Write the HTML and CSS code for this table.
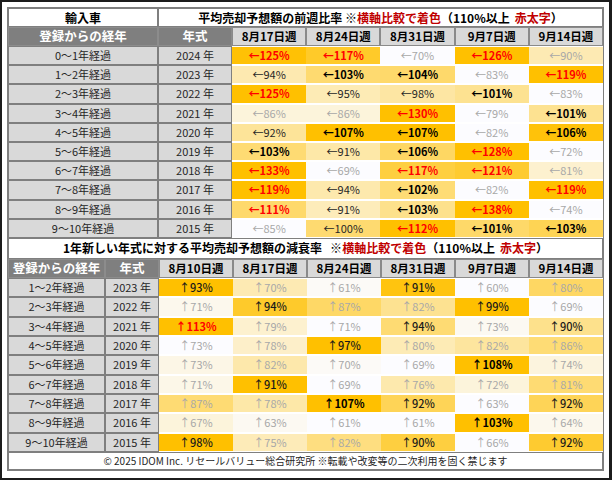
FILE: index.html
```html
<!DOCTYPE html>
<html lang="ja">
<head>
<meta charset="utf-8">
<link rel="stylesheet" href="styles.css">
</head>
<body>
<div class="frame">
<div class="sheet">
  <div class="grid top">
    <div class="ttl">輸入車</div>
    <div class="ttl span">平均売却予想額の前週比率 ※<span class="dr">横軸比較で着色</span>（110%以上<span class="dr sp">赤太字</span>）</div>
    <div class="hd">登録からの経年</div><div class="hd">年式</div>
    <div class="wk">8月17日週</div><div class="wk">8月24日週</div><div class="wk">8月31日週</div><div class="wk">9月7日週</div><div class="wk">9月14日週</div>

    <div class="lab">0～1年経過</div><div class="lab">2024 年</div>
    <div class="c r" style="--t:.98">←125%</div><div class="c r" style="--t:.84">←117%</div><div class="c g" style="--t:0">←70%</div><div class="c r" style="--t:1">←126%</div><div class="c g" style="--t:.3">←90%</div>

    <div class="lab">1～2年経過</div><div class="lab">2023 年</div>
    <div class="c n" style="--t:.31">←94%</div><div class="c b" style="--t:.56">←103%</div><div class="c b" style="--t:.58">←104%</div><div class="c g" style="--t:0">←83%</div><div class="c r" style="--t:1">←119%</div>

    <div class="lab">2～3年経過</div><div class="lab">2022 年</div>
    <div class="c r" style="--t:1">←125%</div><div class="c n" style="--t:.29">←95%</div><div class="c n" style="--t:.36">←98%</div><div class="c b" style="--t:.43">←101%</div><div class="c g" style="--t:0">←83%</div>

    <div class="lab">3～4年経過</div><div class="lab">2021 年</div>
    <div class="c g" style="--t:.14">←86%</div><div class="c g" style="--t:.14">←86%</div><div class="c r" style="--t:1">←130%</div><div class="c g" style="--t:0">←79%</div><div class="c b" style="--t:.43">←101%</div>

    <div class="lab">4～5年経過</div><div class="lab">2020 年</div>
    <div class="c n" style="--t:.4">←92%</div><div class="c b" style="--t:1">←107%</div><div class="c b" style="--t:1">←107%</div><div class="c g" style="--t:0">←82%</div><div class="c b" style="--t:.96">←106%</div>

    <div class="lab">5～6年経過</div><div class="lab">2019 年</div>
    <div class="c b" style="--t:.55">←103%</div><div class="c n" style="--t:.34">←91%</div><div class="c b" style="--t:.61">←106%</div><div class="c r" style="--t:1">←128%</div><div class="c g" style="--t:0">←72%</div>

    <div class="lab">6～7年経過</div><div class="lab">2018 年</div>
    <div class="c r" style="--t:1">←133%</div><div class="c g" style="--t:0">←69%</div><div class="c r" style="--t:.75">←117%</div><div class="c r" style="--t:.81">←121%</div><div class="c g" style="--t:.19">←81%</div>

    <div class="lab">7～8年経過</div><div class="lab">2017 年</div>
    <div class="c r" style="--t:1">←119%</div><div class="c n" style="--t:.32">←94%</div><div class="c b" style="--t:.54">←102%</div><div class="c g" style="--t:0">←82%</div><div class="c r" style="--t:1">←119%</div>

    <div class="lab">8～9年経過</div><div class="lab">2016 年</div>
    <div class="c r" style="--t:.58">←111%</div><div class="c n" style="--t:.27">←91%</div><div class="c b" style="--t:.45">←103%</div><div class="c r" style="--t:1">←138%</div><div class="c g" style="--t:0">←74%</div>

    <div class="lab">9～10年経過</div><div class="lab">2015 年</div>
    <div class="c g" style="--t:0">←85%</div><div class="c n" style="--t:.56">←100%</div><div class="c r" style="--t:1">←112%</div><div class="c b" style="--t:.59">←101%</div><div class="c b" style="--t:.67">←103%</div>
  </div>

  <div class="grid bot">
    <div class="ttl full">1年新しい年式に対する平均売却予想額の減衰率<span class="sp2">※</span><span class="dr">横軸比較で着色</span>（110%以上<span class="dr sp">赤太字</span>）</div>
    <div class="hd">登録からの経年</div><div class="hd">年式</div>
    <div class="wk">8月10日週</div><div class="wk">8月17日週</div><div class="wk">8月24日週</div><div class="wk">8月31日週</div><div class="wk">9月7日週</div><div class="wk">9月14日週</div>

    <div class="lab">1～2年経過</div><div class="lab">2023 年</div>
    <div class="c d" style="--t:1">↑93%</div><div class="c g" style="--t:.3">↑70%</div><div class="c g" style="--t:.03">↑61%</div><div class="c d" style="--t:.94">↑91%</div><div class="c g" style="--t:0">↑60%</div><div class="c g" style="--t:.61">↑80%</div>

    <div class="lab">2～3年経過</div><div class="lab">2022 年</div>
    <div class="c g" style="--t:.07">↑71%</div><div class="c d" style="--t:.83">↑94%</div><div class="c g" style="--t:.6">↑87%</div><div class="c g" style="--t:.43">↑82%</div><div class="c d" style="--t:1">↑99%</div><div class="c g" style="--t:0">↑69%</div>

    <div class="lab">3～4年経過</div><div class="lab">2021 年</div>
    <div class="c r" style="--t:1">↑113%</div><div class="c g" style="--t:.19">↑79%</div><div class="c g" style="--t:0">↑71%</div><div class="c d" style="--t:.55">↑94%</div><div class="c g" style="--t:.05">↑73%</div><div class="c d" style="--t:.45">↑90%</div>

    <div class="lab">4～5年経過</div><div class="lab">2020 年</div>
    <div class="c g" style="--t:0">↑73%</div><div class="c g" style="--t:.21">↑78%</div><div class="c d" style="--t:1">↑97%</div><div class="c g" style="--t:.29">↑80%</div><div class="c g" style="--t:.38">↑82%</div><div class="c g" style="--t:.54">↑86%</div>

    <div class="lab">5～6年経過</div><div class="lab">2019 年</div>
    <div class="c g" style="--t:.1">↑73%</div><div class="c g" style="--t:.33">↑82%</div><div class="c g" style="--t:.03">↑70%</div><div class="c g" style="--t:0">↑69%</div><div class="c b" style="--t:1">↑108%</div><div class="c g" style="--t:.13">↑74%</div>

    <div class="lab">6～7年経過</div><div class="lab">2018 年</div>
    <div class="c g" style="--t:.09">↑71%</div><div class="c d" style="--t:1">↑91%</div><div class="c g" style="--t:0">↑69%</div><div class="c g" style="--t:.32">↑76%</div><div class="c g" style="--t:.14">↑72%</div><div class="c g" style="--t:.55">↑81%</div>

    <div class="lab">7～8年経過</div><div class="lab">2017 年</div>
    <div class="c g" style="--t:.55">↑87%</div><div class="c g" style="--t:.34">↑78%</div><div class="c b" style="--t:1">↑107%</div><div class="c d" style="--t:.66">↑92%</div><div class="c g" style="--t:0">↑63%</div><div class="c d" style="--t:.66">↑92%</div>

    <div class="lab">8～9年経過</div><div class="lab">2016 年</div>
    <div class="c g" style="--t:.14">↑67%</div><div class="c g" style="--t:.05">↑63%</div><div class="c g" style="--t:0">↑61%</div><div class="c g" style="--t:0">↑61%</div><div class="c b" style="--t:1">↑103%</div><div class="c g" style="--t:.07">↑64%</div>

    <div class="lab">9～10年経過</div><div class="lab">2015 年</div>
    <div class="c d" style="--t:1">↑98%</div><div class="c g" style="--t:.28">↑75%</div><div class="c g" style="--t:.5">↑82%</div><div class="c d" style="--t:.75">↑90%</div><div class="c g" style="--t:0">↑66%</div><div class="c d" style="--t:.81">↑92%</div>
  </div>

  <div class="foot">© 2025 IDOM Inc. リセールバリュー総合研究所 ※転載や改変等の二次利用を固く禁じます</div>
</div>
</div>
</body>
</html>
```
FILE: styles.css
```css
* { box-sizing: border-box; }
html, body { margin: 0; padding: 0; background: #fff; }
body {
  font-family: "Noto Sans CJK JP", "Noto Sans", sans-serif;
  color: #262626;
}
.frame {
  width: 612px;
  height: 480px;
  border: 2px solid #1c1c1c;
  border-right-width: 3px;
  padding: 5px;
}
.sheet {
  width: 597px;
  border: 1px solid #7f7f7f;
  background: #fff;
}
.grid { display: grid; }
.top {
  grid-template-columns: 150px 74px repeat(5, 1fr);
  grid-template-rows: 19px 19px repeat(10, 19.2px);
}
.bot {
  grid-template-columns: 97px 54px repeat(6, 1fr);
  grid-template-rows: 21px 19px repeat(9, 19.33px);
}
.grid > div {
  display: flex;
  align-items: center;
  justify-content: center;
  white-space: nowrap;
  line-height: 1;
  overflow: hidden;
}
.ttl {
  background: #fff;
  border: 1px solid #7f7f7f;
  font-weight: 700;
  font-size: 12px;
  color: #000;
}
.span { grid-column: 2 / -1; }
.full { grid-column: 1 / -1; }
.dr { color: #c00000; }
.sp { margin-left: 5px; }
.sp2 { margin-left: 8px; }
.hd {
  background: #7f7f7f;
  border: 1px solid #8c8c8c;
  color: #fff;
  font-weight: 700;
  font-size: 12.5px;
}
.wk {
  background: #d9d9d9;
  border: 1px solid #8a8a8a;
  color: #000;
  font-weight: 700;
  font-size: 11.5px;
}
.lab {
  background: #d9d9d9;
  border: 1px solid #7f7f7f;
  font-size: 11px;
  color: #262626;
}
.c {
  --t: 0;
  background: rgb(calc(252 + 3 * var(--t)) calc(252 - 60 * var(--t)) calc(255 - 255 * var(--t)));
  border-top: 1px solid #fff;
  border-bottom: 1px solid #fff;
  font-size: 11px;
}
.g { color: #a8a8a8; }
.n { color: #262626; }
.d { color: #1a1a1a; font-weight: 500; }
.b { color: #000; font-weight: 700; }
.r { color: #ff0000; font-weight: 700; }
.foot {
  height: 18px;
  border: 1px solid #7f7f7f;
  display: flex;
  align-items: center;
  justify-content: center;
  font-size: 10px;
  color: #262626;
  white-space: nowrap;
}
```
